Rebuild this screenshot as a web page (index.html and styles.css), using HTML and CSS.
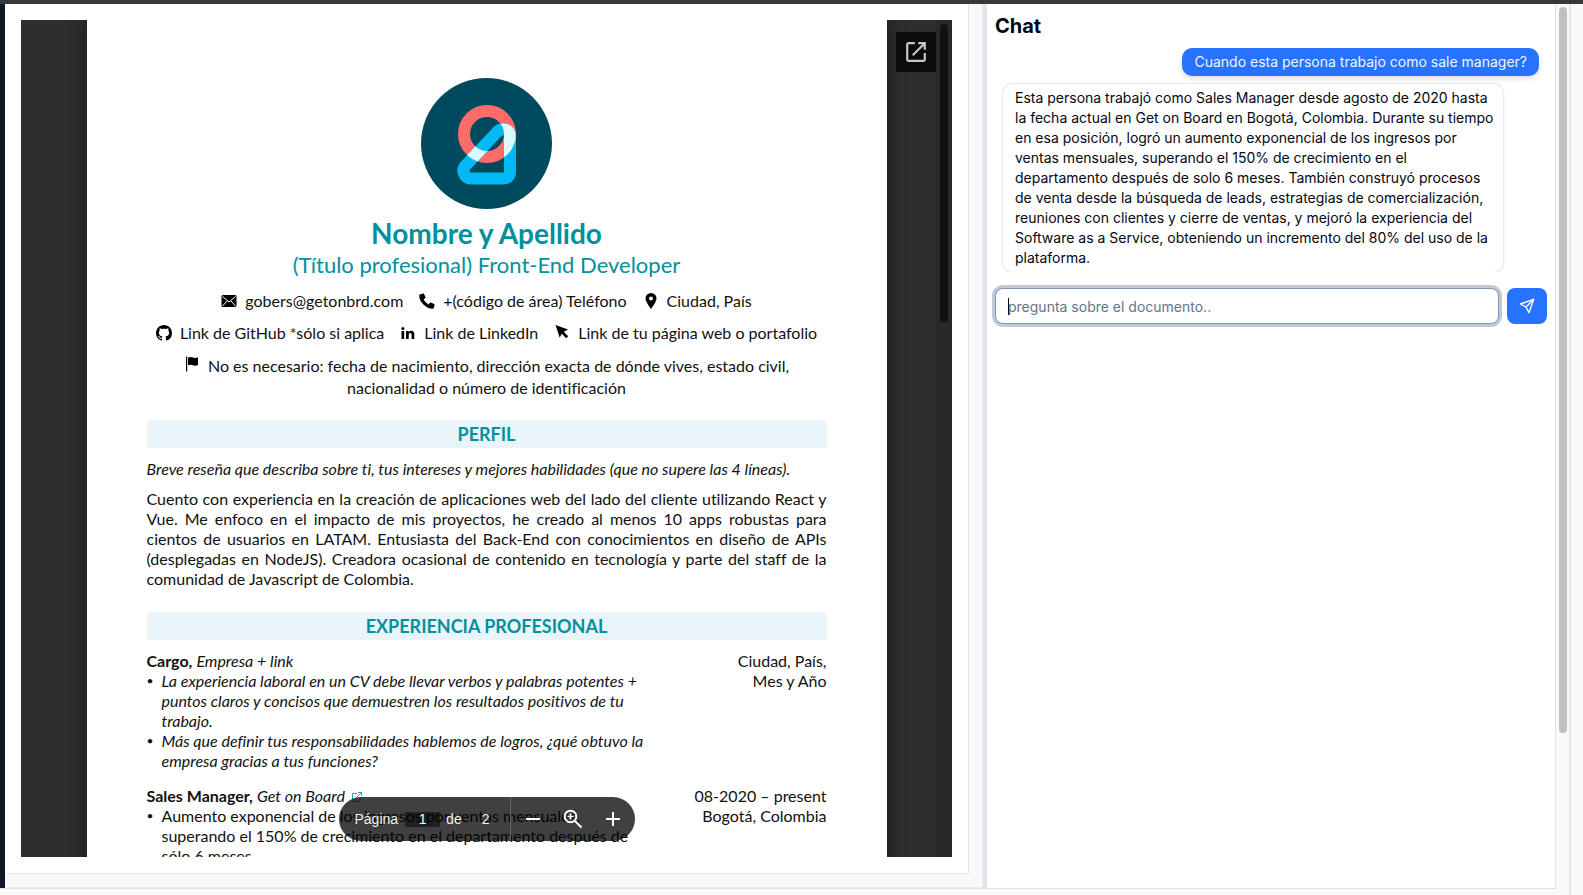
FILE: index.html
```html
<!DOCTYPE html>
<html lang="es">
<head>
<meta charset="utf-8">
<title>Chat con documento</title>
<link rel="stylesheet" href="styles.css">
</head>
<body>
<div class="topbar"></div>
<div class="frame">
  <div class="shell">
    <main class="workspace">
      <div class="rail"></div>
      <section class="doc-pane">
        <div class="doc-card">
          <div class="viewer">
            <article class="page">
              <svg class="avatar" viewBox="0 0 131 131" aria-label="Logo">
                <defs>
                  <clipPath id="ring-area"><path clip-rule="evenodd" d="M66 27a29 29 0 1 1 0 58a29 29 0 1 1 0-58zM66 39a17 17 0 1 0 0 34a17 17 0 1 0 0-34z"/></clipPath>
                </defs>
                <circle cx="65.500" cy="65.500" r="65.500" fill="#004a5d"/>
                <circle cx="66" cy="56" r="23" fill="none" stroke="#ff6b6b" stroke-width="12"/>
                <path d="M77 53L45 87Q41 91 43 95.500Q45 100.500 50 100.500H82Q89 100.500 89 93.500V59Q89 52 83 51.500Q79 51 77 53Z" fill="none" stroke="#03b9f5" stroke-width="12"/>
                <g clip-path="url(#ring-area)"><path d="M77 53L45 87Q41 91 43 95.500Q45 100.500 50 100.500H82Q89 100.500 89 93.500V59Q89 52 83 51.500Q79 51 77 53Z" fill="none" stroke="#d9fbfb" stroke-width="12"/></g>
              </svg>
              <h1 class="name">Nombre y Apellido</h1>
              <p class="role">(Título profesional) Front-End Developer</p>
              <ul class="contacts">
                <li><svg class="ico" viewBox="0 0 16 16"><rect x="0.500" y="2" width="15" height="12" rx="1.500"/><path d="M1.500 3.500L8 9l6.500-5.500M1.500 13L6 8M14.500 13L10 8" fill="none" stroke="#fff" stroke-width="1"/></svg><span>gobers@getonbrd.com</span></li>
                <li><svg class="ico" viewBox="0 0 16 16"><path d="M1 1.500L4 .4q.8-.2 1.100.5l1.300 3.200q.2.700-.3 1.200L4.600 6.500q1.600 3.300 4.900 4.900l1.200-1.500q.5-.5 1.200-.3l3.200 1.300q.7.300.5 1.100l-.8 3q-.2.800-1 .8Q8.500 15.800 4.400 11.600Q.2 7.500.2 2.500q0-.8.8-1z"/></svg><span>+(código de área) Teléfono</span></li>
                <li><svg class="ico" viewBox="0 0 16 16"><path fill-rule="evenodd" d="M8 0a5.500 5.500 0 0 1 5.500 5.500C13.500 9 8 16 8 16S2.500 9 2.500 5.500A5.500 5.500 0 0 1 8 0zm0 3.500a2 2 0 1 0 0 4a2 2 0 1 0 0-4z"/></svg><span>Ciudad, País</span></li>
              </ul>
              <ul class="contacts">
                <li><svg class="ico" viewBox="0 0 16 16"><path d="M8 0C3.580 0 0 3.580 0 8c0 3.540 2.290 6.530 5.470 7.590.4.070.55-.17.55-.38 0-.19-.01-.82-.01-1.490-2.010.37-2.530-.49-2.690-.94-.09-.23-.48-.94-.82-1.130-.28-.15-.68-.52-.01-.53.63-.01 1.080.58 1.230.82.72 1.210 1.870.87 2.330.66.07-.52.28-.87.510-1.070-1.780-.2-3.640-.89-3.640-3.950 0-.87.31-1.590.82-2.150-.08-.2-.36-1.020.08-2.120 0 0 .67-.21 2.200.82.64-.18 1.320-.27 2-.27s1.360.09 2 .27c1.530-1.040 2.200-.82 2.200-.82.44 1.100.16 1.920.08 2.120.51.56.82 1.270.82 2.150 0 3.070-1.870 3.750-3.650 3.950.29.25.54.73.54 1.480 0 1.070-.01 1.930-.01 2.200 0 .21.15.46.55.38A8 8 0 0 0 16 8c0-4.420-3.580-8-8-8z"/></svg><span>Link de GitHub *sólo si aplica</span></li>
                <li><svg class="ico" viewBox="0 0 16 16"><path d="M1.500 6h2.700v8H1.500zM6 6h2.600v1.100Q9.500 5.800 11.300 5.800q3 0 3 3.500V14h-2.700V9.800q0-1.800-1.300-1.800-1.600 0-1.600 1.900V14H6z"/><circle cx="2.850" cy="3.600" r="1.500"/></svg><span>Link de LinkedIn</span></li>
                <li><svg class="ico" viewBox="0 0 16 16"><path d="M1.500 0L14 4.500L9.800 6.800L14.200 11.200L12.200 13.200L7.800 8.800L5.700 12.500Z"/></svg><span>Link de tu página web o portafolio</span></li>
              </ul>
              <p class="notice"><svg class="ico" viewBox="0 0 16 16"><path d="M2 .5h1.200v15H2zM4 1.500q3-1.200 5 0q2.500 1 5-.2v7.700q-2.500 1.200-5 .2q-2-1-5 0z"/></svg> No es necesario: fecha de nacimiento, dirección exacta de dónde vives, estado civil, nacionalidad o número de identificación</p>
              <h2 class="band">PERFIL</h2>
              <p class="hint">Breve reseña que describa sobre ti, tus intereses y mejores habilidades (que no supere las 4 líneas).</p>
              <p class="profile">Cuento con experiencia en la creación de aplicaciones web del lado del cliente utilizando React y Vue. Me enfoco en el impacto de mis proyectos, he creado al menos 10 apps robustas para cientos de usuarios en LATAM. Entusiasta del Back-End con conocimientos en diseño de APIs (desplegadas en NodeJS). Creadora ocasional de contenido en tecnología y parte del staff de la comunidad de Javascript de Colombia.</p>
              <h2 class="band">EXPERIENCIA PROFESIONAL</h2>
              <section class="job">
                <div class="job-main">
                  <h3><b>Cargo,</b> <i>Empresa + link</i></h3>
                  <ul class="italic">
                    <li>La experiencia laboral en un CV debe llevar verbos y palabras potentes + puntos claros y concisos que demuestren los resultados positivos de tu trabajo.</li>
                    <li>Más que definir tus responsabilidades hablemos de logros, ¿qué obtuvo la empresa gracias a tus funciones?</li>
                  </ul>
                </div>
                <p class="job-meta">Ciudad, País,<br>Mes y Año</p>
              </section>
              <section class="job">
                <div class="job-main">
                  <h3><b>Sales Manager,</b> <i>Get on Board</i> <a href="#" aria-label="Get on Board"><svg class="ext" viewBox="0 0 10 10"><path d="M5 1.500H.5v8h7.500V5M3.500 6.500L9.500.500M6 .5h3.500V4" fill="none" stroke="#2aa5b3"/></svg></a></h3>
                  <ul>
                    <li>Aumento exponencial de los ingresos por ventas mensuales, superando el 150% de crecimiento en el departamento después de sólo 6 meses.</li>
                  </ul>
                </div>
                <p class="job-meta">08-2020 – present<br>Bogotá, Colombia</p>
              </section>
            </article>
            <div class="viewer-track"><div class="viewer-thumb"></div></div>
            <button class="popout" type="button" aria-label="Abrir en ventana nueva"><svg viewBox="0 0 20 20"><path d="M9 2H3.500Q2 2 2 3.500v13Q2 18 3.500 18h13q1.500 0 1.500-1.500V11M12 2h6v6M17.500 2.500L7 13" fill="none" stroke="#c6c6c6" stroke-width="2"/></svg></button>
            <div class="pdf-tools">
              <div class="pager"><label for="pg">Página</label><input id="pg" value="1"><span>de</span><span>2</span></div>
              <div class="zooms">
                <button type="button" aria-label="Alejar"><svg viewBox="0 0 24 24"><path d="M5 12h14" stroke="#fff" stroke-width="2"/></svg></button>
                <button type="button" aria-label="Restablecer zoom"><svg viewBox="0 0 24 24"><g fill="none" stroke="#fff" stroke-width="2"><circle cx="9.500" cy="9.500" r="5.800"/><path d="M14 14l6.500 6.500"/></g><path d="M9.500 6.500v6M6.500 9.500h6" stroke="#fff" stroke-width="1.600"/></svg></button>
                <button type="button" aria-label="Acercar"><svg viewBox="0 0 24 24"><path d="M5 12h14M12 5v14" stroke="#fff" stroke-width="2"/></svg></button>
              </div>
            </div>
          </div>
        </div>
      </section>
      <div class="divider"></div>
      <section class="chat">
        <h2 class="chat-title">Chat</h2>
        <div class="messages">
          <p class="msg user">Cuando esta persona trabajo como sale manager?</p>
          <p class="msg bot">Esta persona trabajó como Sales Manager desde agosto de 2020 hasta la fecha actual en Get on Board en Bogotá, Colombia. Durante su tiempo en esa posición, logró un aumento exponencial de los ingresos por ventas mensuales, superando el 150% de crecimiento en el departamento después de solo 6 meses. También construyó procesos de venta desde la búsqueda de leads, estrategias de comercialización, reuniones con clientes y cierre de ventas, y mejoró la experiencia del Software as a Service, obteniendo un incremento del 80% del uso de la plataforma.</p>
        </div>
        <form class="composer">
          <div class="field"><input type="text" aria-label="Pregunta" placeholder="pregunta sobre el documento.."><span class="caret"></span></div>
          <button type="submit" aria-label="Enviar"><svg viewBox="0 0 24 24"><g fill="none" stroke="#fff" stroke-width="2" stroke-linecap="round" stroke-linejoin="round"><path d="M22 2L2 9l8.500 4.500L15 22z"/><path d="M22 2L10.500 13.500"/></g></svg></button>
        </form>
      </section>
    </main>
    <div class="below"></div>
  </div>
  <div class="scroll-track"><div class="scroll-thumb"></div></div>
  <div class="margin-strip"></div>
</div>
</body>
</html>
```
FILE: styles.css
```css
* { box-sizing: border-box; }
body {
  margin: 0;
  height: 100vh;
  overflow: hidden;
  display: flex;
  flex-direction: column;
  background: #f9f9f9;
  font-family: Inter, "Liberation Sans", sans-serif;
  color: #030712;
}
h1, h2, h3, p, ul { margin: 0; padding: 0; font-weight: 400; }
ul { list-style: none; }
button { border: 0; padding: 0; cursor: pointer; display: grid; place-items: center; }

.topbar { height: 4px; background: #383838; flex: none; }
.frame { flex: 1; min-height: 0; display: flex; }
.shell { flex: 1; min-width: 0; display: flex; flex-direction: column; }
.workspace {
  flex: 1;
  min-height: 0;
  display: grid;
  grid-template-columns: 5px minmax(0, 978fr) 4px minmax(0, 569fr);
  grid-template-rows: minmax(0, 1fr);
}
.below { height: 7px; border-top: 1px solid #e4e4e4; }
.rail { background: #101827; }
.divider { background: #dfe6f0; }

.doc-pane {
  padding: 0 13px 13px 0;
  background: #f9f9f9;
  border-right: 1px solid #ebebeb;
  border-bottom: 1px solid #ebebeb;
  display: flex;
}
.doc-card {
  flex: 1;
  min-width: 0;
  display: flex;
  padding: 16px;
  background: #fff;
  border-right: 1px solid #e4e4e4;
  border-bottom: 1px solid #e4e4e4;
}
.viewer {
  flex: 1;
  min-width: 0;
  position: relative;
  overflow: hidden;
  background: #2e2e2e;
}
.page {
  max-width: 800px;
  min-height: 100%;
  margin: 0 auto;
  padding: 58px 60px 0;
  background: #fff;
  box-shadow: 0 0 14px 4px rgba(0, 0, 0, 0.3);
  font-family: Lato, "Open Sans", sans-serif;
  font-size: 16px;
  line-height: 20px;
  font-variant-ligatures: no-common-ligatures;
  color: #111;
}
.avatar { display: block; width: 131px; height: 131px; margin: 0 auto 7px; }
.name {
  font-size: 28px;
  line-height: 34px;
  font-weight: 700;
  color: #00909e;
  text-align: center;
}
.role {
  margin-bottom: 11px;
  font-size: 22px;
  line-height: 30px;
  color: #00909e;
  text-align: center;
}
.contacts {
  display: flex;
  justify-content: center;
  gap: 16px;
  margin-bottom: 12px;
}
.contacts li { display: flex; gap: 8px; white-space: nowrap; }
.contacts .ico { margin-top: 2px; }
.ico { width: 16px; height: 16px; fill: #000; flex: none; }
.notice { padding: 0 30px; line-height: 22px; text-align: center; }
.notice .ico { margin-right: 4px; }
.band {
  margin-top: 21px;
  border-radius: 2px;
  background: #e9f5f8;
  color: #00909e;
  font-size: 18px;
  line-height: 28px;
  font-weight: 700;
  text-align: center;
}
.hint { margin: 11px 0 10px; font-style: italic; }
.profile { text-align: justify; margin-bottom: 23px; }
.job { display: flex; justify-content: space-between; margin: 11px 0 15px; }
.job-main { width: 500px; }
.job h3 { font-size: 16px; }
.job b { font-weight: 700; }
.job li { position: relative; padding-left: 15px; }
.job li::before {
  content: "•";
  position: absolute;
  left: 0;
  font-size: 12px;
  font-style: normal;
}
.italic { font-style: italic; }
.job-meta { text-align: right; white-space: nowrap; }
.ext { width: 10px; height: 10px; margin-left: 3px; }

.viewer-track {
  position: absolute;
  top: 0;
  right: 0;
  bottom: 0;
  width: 16px;
  padding: 4px;
  background: #292929;
}
.viewer-thumb { height: 36%; border-radius: 4px; background: #101010; }
.popout {
  position: absolute;
  top: 12px;
  right: 16px;
  width: 40px;
  height: 40px;
  background: #0b0b0b;
}
.popout svg { width: 22px; height: 22px; }
.pdf-tools {
  position: absolute;
  left: 50%;
  bottom: 16px;
  width: 296px;
  height: 44px;
  transform: translateX(-50%);
  display: flex;
  border-radius: 22px;
  background: rgba(0, 0, 0, 0.75);
  color: #f1f1f1;
  font: 14px/20px "Liberation Sans", sans-serif;
}
.pager {
  display: flex;
  align-items: center;
  width: 172px;
  padding-left: 16px;
  border-right: 1px solid #666;
}
.pager input {
  width: 35px;
  height: 15px;
  margin: 0 6px 0 7px;
  padding: 0;
  border: 0;
  background: rgba(0, 0, 0, 0.5);
  color: #fff;
  font: inherit;
  text-align: center;
}
.pager span + span { margin-left: 20px; }
.zooms { display: flex; align-items: center; gap: 16px; padding-left: 10px; }
.zooms button { width: 24px; height: 24px; background: none; }
.zooms svg { width: 24px; height: 24px; }

.chat { padding: 8px; background: #fff; border-right: 1px solid #e2e2e2; }
.chat-title { font-size: 20px; line-height: 28px; font-weight: 700; margin-bottom: 8px; }
.messages {
  display: flex;
  flex-direction: column;
  align-items: flex-start;
  gap: 8px;
  height: 224px;
  padding: 0 8px;
  overflow: hidden;
}
.msg {
  padding: 4px 12px;
  border-radius: 10px;
  font-size: 14px;
  line-height: 20px;
}
.user {
  align-self: flex-end;
  color: #f1f5fe;
  background: #2673ff;
  box-shadow: 0 3px 6px -1px rgba(0, 0, 0, 0.16);
}
.bot {
  margin-right: 36px;
  padding-right: 4px;
  background: #fff;
  box-shadow: 0 0 2px 1px rgba(0, 0, 0, 0.1);
}
.composer { display: flex; gap: 8px; margin-top: 16px; }
.field { flex: 1; position: relative; display: flex; }
.field input {
  flex: 1;
  min-width: 0;
  height: 36px;
  padding: 0 12px;
  border: 1px solid #8095b2;
  border-radius: 8px;
  outline: 0;
  box-shadow: 0 0 0 3px #bfc9d7;
  color: inherit;
  font: 14px/20px Inter, "Liberation Sans", sans-serif;
}
.field input::placeholder { color: #64748b; opacity: 1; }
.caret { position: absolute; left: 13px; top: 10px; width: 1px; height: 17px; background: #000; }
.composer button { width: 40px; height: 36px; border-radius: 8px; background: #2673ff; }
.composer button svg { width: 16px; height: 16px; }

.scroll-track { width: 15px; padding: 3px; border-right: 2px solid #e7e7e7; }
.scroll-thumb { width: 8px; height: 82%; border-radius: 4px; background: #c0c0c0; }
.margin-strip { width: 12px; }
```
